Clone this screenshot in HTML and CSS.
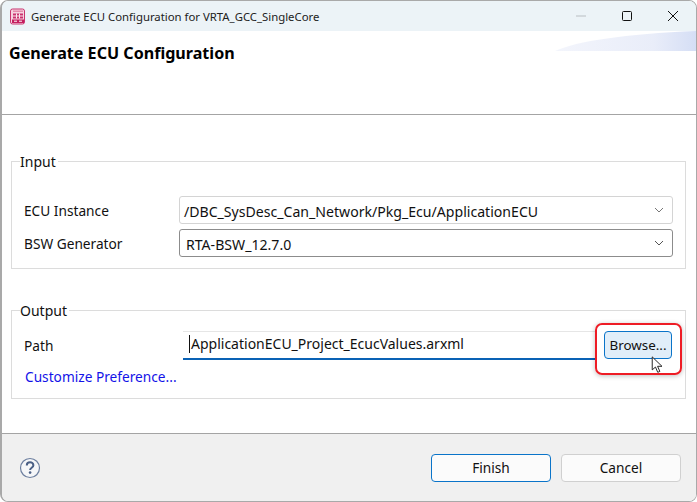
FILE: index.html
```html
<!DOCTYPE html>
<html lang="en">
<head>
<meta charset="utf-8">
<title>Generate ECU Configuration</title>
<link rel="stylesheet" href="styles.css">
</head>
<body>
<div class="window">
  <div class="titlebar">
    <svg class="app-icon" width="17" height="17" viewBox="0 0 17 17">
      <rect x="1.5" y="1" width="14" height="15" rx="2" fill="#f6d3e0" stroke="#c9336f"/>
      <path d="M4 2.5h10v1.5H4z" fill="#e58aac"/>
      <path d="M4 5.5h10v5H4z" fill="#c9336f"/>
      <path d="M4 8h10M7.5 5.5v5M10.5 5.5v5" stroke="#fbe6ee" fill="none"/>
      <path d="M3 11.5h12v3.5H3z" fill="#c41e5e"/>
      <path d="M5 13.2h3M10 13.2h3" stroke="#fff"/>
    </svg>
    <span class="title-text">Generate ECU Configuration for VRTA_GCC_SingleCore</span>
    <div class="win-controls">
      <svg class="ctl" width="46" height="30" viewBox="0 0 46 30"><path d="M18 15h10" stroke="#b9bec2"/></svg>
      <svg class="ctl" width="46" height="30" viewBox="0 0 46 30"><rect x="18.5" y="10.5" width="9" height="9" rx="1" fill="none" stroke="#111"/></svg>
      <svg class="ctl" width="46" height="30" viewBox="0 0 46 30"><path d="M18 10l10 10M28 10L18 20" stroke="#111" fill="none"/></svg>
    </div>
  </div>
  <div class="banner">
    <h1 class="banner-title">Generate ECU Configuration</h1>
    <svg class="banner-art" width="141" height="20" viewBox="0 0 141 20">
      <defs>
        <linearGradient id="swoosh" x1="0" x2="1" y1="0" y2="0">
          <stop offset="0" stop-color="#f3f5fc"/>
          <stop offset="0.7" stop-color="#e9edf9"/>
          <stop offset="1" stop-color="#d5def5"/>
        </linearGradient>
      </defs>
      <path d="M0 20C22 10 70 3 141 0V20Z" fill="url(#swoosh)"/>
    </svg>
  </div>
  <main class="content">
    <fieldset class="group group-input">
      <legend class="group-legend">Input</legend>
      <div class="row">
        <label class="field-label">ECU Instance</label>
        <div class="combo combo-soft"><span class="combo-text">/DBC_SysDesc_Can_Network/Pkg_Ecu/ApplicationECU</span>
          <svg class="chev" width="10" height="6" viewBox="0 0 10 6"><path d="M1 1l4 4 4-4" fill="none" stroke="#777"/></svg></div>
      </div>
      <div class="row row-second">
        <label class="field-label">BSW Generator</label>
        <div class="combo combo-strong"><span class="combo-text">RTA-BSW_12.7.0</span>
          <svg class="chev" width="10" height="6" viewBox="0 0 10 6"><path d="M1 1l4 4 4-4" fill="none" stroke="#555"/></svg></div>
      </div>
    </fieldset>
    <fieldset class="group group-output">
      <legend class="group-legend">Output</legend>
      <div class="row path-row">
        <label class="field-label">Path</label>
        <div class="path-input"><span class="caret"></span>ApplicationECU_Project_EcucValues.arxml</div>
        <button class="btn browse">Browse...</button>
      </div>
      <a class="link">Customize Preference...</a>
    </fieldset>
    <div class="highlight"></div>
    <svg class="cursor" width="13" height="18" viewBox="0 0 16 22">
      <path d="M1.5 1v16l4-3.5 2.8 6.5 2.6-1.1-2.8-6.3h5.4z" fill="#fff" stroke="#222" stroke-width="1.2"/>
    </svg>
  </main>
  <footer class="footer">
    <svg class="help" width="22" height="22" viewBox="0 0 22 22">
      <circle cx="11" cy="11" r="9.5" fill="#f5f6f8" stroke="#6d7f9f" stroke-width="1.2"/>
      <path d="M7.8 8.4c0-4.2 6.6-4 6.6-.2 0 2.6-3.3 2.5-3.3 4.8" fill="none" stroke="#4a5f85" stroke-width="2"/>
      <circle cx="11.1" cy="15.6" r="1.3" fill="#4a5f85"/>
    </svg>
    <div class="footer-buttons">
      <button class="btn footer-btn primary">Finish</button>
      <button class="btn footer-btn">Cancel</button>
    </div>
  </footer>
</div>
</body>
</html>
```
FILE: styles.css
```css
* { box-sizing: border-box; }
html, body { margin: 0; padding: 0; background: #fff; }
body { font-family: "Noto Sans", "Open Sans", sans-serif; font-size: 13.7px; color: #111; }
.window {
  width: 697px; height: 502px; display: flex; flex-direction: column; overflow: hidden;
  border: 1px solid #a9a9a9; border-left-width: 2px; border-radius: 8px; background: #fff;
}
.titlebar { height: 30px; flex: none; background: #ecf3f7; display: flex; align-items: center; padding-left: 7px; }
.app-icon { flex: none; }
.title-text { margin-left: 5px; font-size: 11.35px; color: #222; white-space: nowrap; }
.win-controls { margin-left: auto; display: flex; }
.ctl { display: block; }
.banner { height: 84px; flex: none; position: relative; border-bottom: 1px solid #a4a4a4; padding: 12px 0 0 7px; }
.banner-title { margin: 0; font-size: 16.1px; line-height: 20px; font-weight: 700; color: #000; }
.banner-art { position: absolute; right: 0; top: 0; }
.content { flex: 1; position: relative; padding: 37px 10px 0 9px; background: #fff; }
.group { border: 1px solid #dcdcdc; margin: 0; padding: 0 12px; min-width: 0; }
.group-legend { padding: 0 2px 0 0; margin-left: -4px; font-size: 14px; height: 18px; line-height: 20px; color: #111; }
.group-input { height: 117px; padding-top: 26px; }
.group-output { height: 98px; margin-top: 32px; padding-top: 12px; }
.row { display: flex; align-items: center; }
.row-second { margin-top: 5px; }
.field-label { width: 155px; flex: none; white-space: nowrap; line-height: 18px; padding-top: 2px; }
.combo { width: 494px; height: 28px; flex: none; display: flex; align-items: center; justify-content: space-between; background: #fff; border-radius: 3px; padding: 0 8px 0 4px; font-size: 14.1px; }
.combo-soft { border: 1px solid #d4d4d4; }
.combo-strong { border: 1px solid #8c8c8c; padding-left: 6px; }
.combo-text { white-space: nowrap; padding-top: 2px; }
.chev { display: block; flex: none; }
.path-row { align-items: flex-start; }
.path-row .field-label { padding-top: 6px; }
.path-input {
  width: 414px; height: 29px; margin-left: 4px; flex: none; border-top: 1px solid #e6e6e6; border-bottom: 2px solid #0a62b5;
  padding: 2px 0 0 8px; line-height: 20px; position: relative; white-space: nowrap; font-size: 14px;
}
.caret { position: absolute; left: 6px; top: 3px; width: 1px; height: 18px; background: #111; }
.btn { font: inherit; color: #111; border-radius: 4px; padding: 0; }
.browse { width: 68px; height: 28px; margin-left: 7px; background: #e1eef9; border: 1px solid #0a74c9; font-size: 13.4px; }
.link { display: block; margin-top: 7px; margin-left: 1px; color: #1313e8; line-height: 20px; white-space: nowrap; }
.highlight { position: absolute; left: 593px; top: 208px; width: 87px; height: 52px; border: 2px solid #ee1c25; border-radius: 7px; box-shadow: 0 1px 5px rgba(0,0,0,.25); }
.cursor { position: absolute; left: 649px; top: 241px; }
.footer { flex: none; height: 68px; background: #f0f0f0; border-top: 1px solid #a4a4a4; display: flex; align-items: center; justify-content: space-between; padding: 0 15px 0 17px; }
.help { display: block; flex: none; }
.footer-buttons { display: flex; gap: 10px; }
.footer-btn { width: 120px; height: 28px; background: #fbfbfb; border: 1px solid #d0d0d0; }
.primary { border: 1px solid #0a74c9; }
```
